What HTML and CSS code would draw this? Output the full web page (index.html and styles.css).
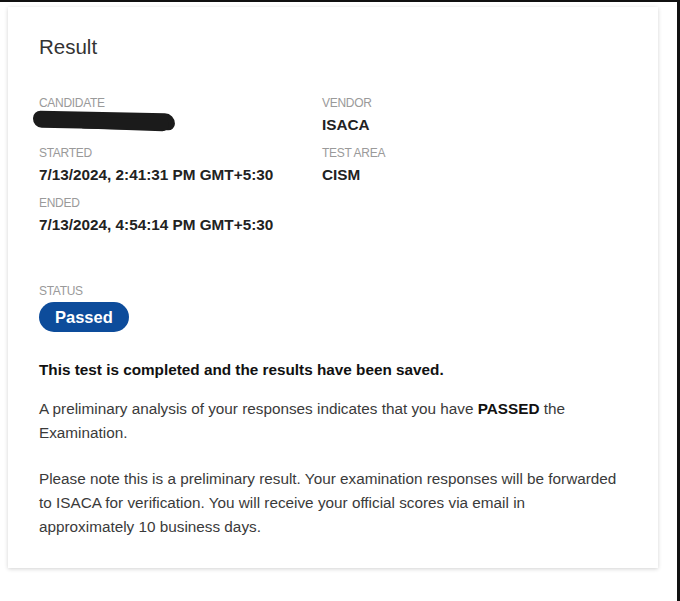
FILE: index.html
```html
<!DOCTYPE html>
<html>
<head>
<meta charset="utf-8">
<link rel="stylesheet" href="styles.css">
</head>
<body>
<div class="frame">
  <div class="card">
    <h1 class="title">Result</h1>
    <div class="grid">
      <div class="col">
        <div class="field">
          <div class="label">Candidate</div>
          <div class="value"><span class="redact"></span><span class="redact2"></span></div>
        </div>
        <div class="field">
          <div class="label">Started</div>
          <div class="value">7/13/2024, 2:41:31 PM GMT+5:30</div>
        </div>
        <div class="field">
          <div class="label">Ended</div>
          <div class="value">7/13/2024, 4:54:14 PM GMT+5:30</div>
        </div>
      </div>
      <div class="col">
        <div class="field">
          <div class="label">Vendor</div>
          <div class="value">ISACA</div>
        </div>
        <div class="field">
          <div class="label">Test Area</div>
          <div class="value">CISM</div>
        </div>
      </div>
    </div>
    <div class="status">
      <div class="label">Status</div>
      <span class="pill">Passed</span>
    </div>
    <p class="done">This test is completed and the results have been saved.</p>
    <p class="text">A preliminary analysis of your responses indicates that you have <b>PASSED</b> the Examination.</p>
    <p class="text second">Please note this is a preliminary result. Your examination responses will be forwarded to ISACA for verification. You will receive your official scores via email in approximately 10 business days.</p>
  </div>
</div>
</body>
</html>
```
FILE: styles.css
```css
html, body {
  margin: 0;
  padding: 0;
  background: #fff;
}
body {
  font-family: "Liberation Sans", Arial, sans-serif;
  color: #222;
}
.frame {
  width: 680px;
  height: 601px;
  box-sizing: border-box;
  border-top: 2px solid #111;
  border-right: 3px solid #111;
  padding: 5px 0 0 8px;
  background: #fff;
}
.card {
  width: 650px;
  height: 561px;
  box-sizing: border-box;
  background: #fff;
  box-shadow: 0 1px 4px rgba(0,0,0,0.18);
  padding: 28px 31px 0 31px;
}
.title {
  margin: 0;
  font-size: 20.5px;
  font-weight: normal;
  color: #333;
  line-height: 24px;
}
.grid {
  display: grid;
  grid-template-columns: 283px 1fr;
  margin-top: 36px;
}
.field {
  margin-bottom: 6px;
}
.label {
  font-size: 12px;
  text-transform: uppercase;
  color: #9a9a9a;
  line-height: 16px;
  letter-spacing: -0.3px;
}
.value {
  font-size: 15.3px;
  font-weight: bold;
  color: #222;
  line-height: 28px;
  height: 28px;
  position: relative;
}
.redact {
  position: absolute;
  left: -6px;
  top: 1px;
  width: 142px;
  height: 17px;
  background: #1b1b1b;
  border-radius: 10px 14px 9px 12px;
  transform: rotate(1.2deg);
}
.redact2 {
  position: absolute;
  left: 40px;
  top: 7px;
  width: 90px;
  height: 12px;
  background: #1b1b1b;
  border-radius: 6px 8px 10px 8px;
  transform: rotate(2deg);
}
.status {
  margin-top: 38px;
  display: flex;
  flex-direction: column;
  align-items: flex-start;
}
.pill {
  margin-top: 3px;
  background: #0d4c9b;
  color: #fff;
  font-weight: bold;
  font-size: 16.5px;
  line-height: 30px;
  height: 30px;
  padding: 0 16px;
  border-radius: 15px;
}
.done {
  margin: 28px 0 0 0;
  font-size: 15.3px;
  font-weight: bold;
  color: #111;
  line-height: 20px;
}
.text {
  margin: 17px 0 0 0;
  font-size: 15.3px;
  color: #3a3a3a;
  line-height: 24px;
  width: 581px;
}
.text.second {
  margin-top: 22px;
}
.text b {
  color: #111;
}
```
